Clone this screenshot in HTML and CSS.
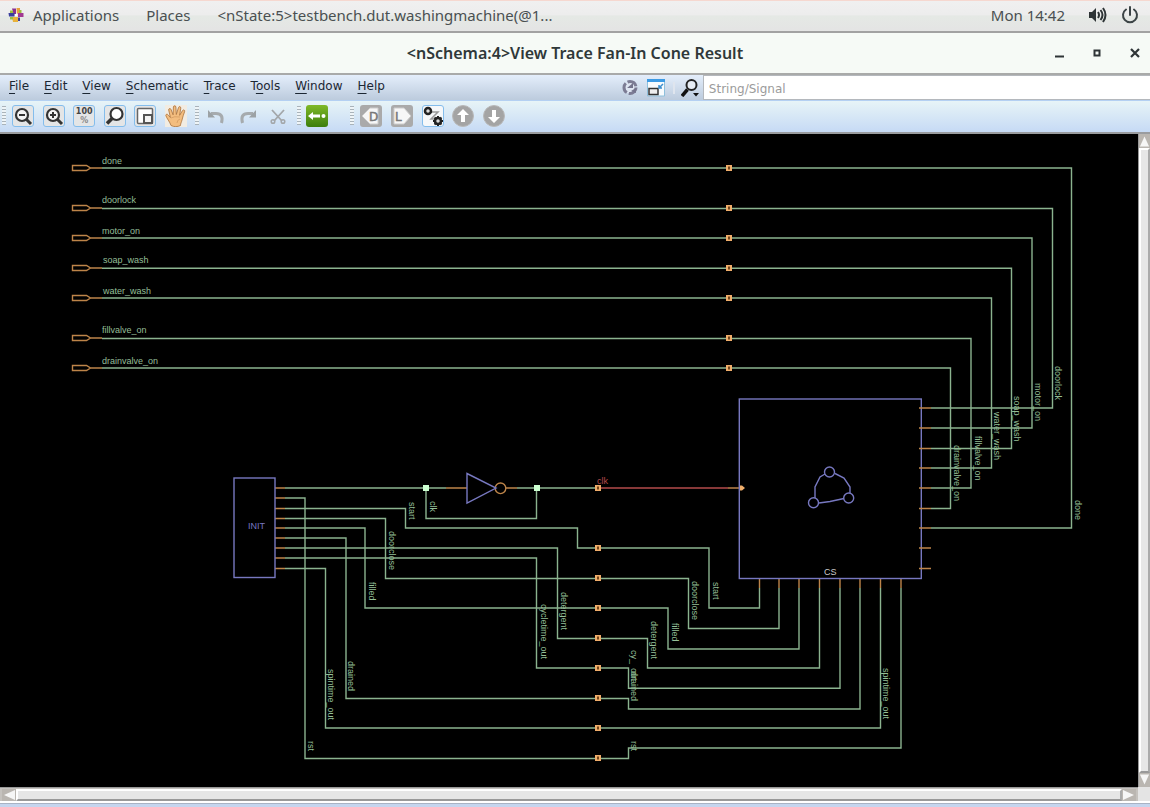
FILE: index.html
```html
<!DOCTYPE html>
<html lang="en">
<head>
<meta charset="utf-8">
<title>View Trace Fan-In Cone Result</title>
<link rel="stylesheet" href="styles.css">
</head>
<body>
<header class="panel">
  <svg class="panel-logo" viewBox="0 0 16 16" aria-hidden="true">
    <path fill="#8a2f8f" d="M4 1.500h4v5.500H5.500z"/><path fill="#e9a03c" d="M8.500 1H12v4L9 7z"/>
    <path fill="#3a3f9d" d="M.5 6h6v3.500H1z"/><path fill="#a23a92" d="M10 6h5.500v4H10z"/>
    <path fill="#e8b23c" d="M4 10h3.500v5H5z"/><path fill="#3e3f96" d="M9.500 10.500H12V14H9z"/>
    <path fill="#9cc03e" d="M2 3.500h3V6H2zM11 3h2.500v3H11zM2 10h3v2.500H2z"/><path fill="#e8b23c" d="M7 10h3v5H7z"/>
    <path fill="#fff" d="M7 7h2v2H7z"/>
  </svg>
  <button class="panel-item">Applications</button>
  <button class="panel-item">Places</button>
  <button class="panel-item">&lt;nState:5&gt;testbench.dut.washingmachine(@1...</button>
  <span class="spacer"></span>
  <button class="panel-item">Mon 14:42</button>
  <button class="panel-icon" aria-label="Volume"><svg viewBox="0 0 18 18"><path fill="#2e3436" d="M0 6h3l4-4v14l-4-4H0z"/><path fill="none" stroke="#2e3436" stroke-width="2" d="M9 6q2 3 0 6M11.500 4q4 5 0 10M14 2q5 7 0 14"/></svg></button>
  <button class="panel-icon" aria-label="Power"><svg viewBox="0 0 18 18"><path fill="none" stroke="#3c4446" stroke-width="2" stroke-linecap="round" d="M9 1v8M5 3.500a7 7 0 1 0 8 0"/></svg></button>
</header>

<div class="titlebar">
  <h1>&lt;nSchema:4&gt;View Trace Fan-In Cone Result</h1>
  <div class="window-buttons">
    <button aria-label="Minimize"><svg viewBox="0 0 10 10"><path stroke="#2e3436" stroke-width="2" d="M1 8.500h9"/></svg></button>
    <button aria-label="Maximize"><svg viewBox="0 0 10 10"><path fill="none" stroke="#2e3436" stroke-width="2" d="M2.500 2.500h5v5h-5z"/></svg></button>
    <button aria-label="Close"><svg viewBox="0 0 10 10"><path stroke="#2e3436" stroke-width="2.200" d="M1 1l8 8M9 1l-8 8"/></svg></button>
  </div>
</div>

<div class="menubar">
  <nav class="menus">
    <button><u>F</u>ile</button><button><u>E</u>dit</button><button><u>V</u>iew</button><button><u>S</u>chematic</button><button><u>T</u>race</button><button>T<u>o</u>ols</button><button><u>W</u>indow</button><button><u>H</u>elp</button>
  </nav>
  <div class="search">
    <button aria-label="Reload"><svg viewBox="0 0 18 18"><circle cx="9" cy="8.500" r="6" fill="#dfe6f2" stroke="#7c7c94" stroke-width="3" stroke-dasharray="10.500 2"/><path fill="#74748c" d="M6 9l6-5v5zM10 12l5-3v5z"/></svg></button>
    <button aria-label="Dock window"><svg viewBox="0 0 18 18"><path fill="#f8fbfd" stroke="#8fc0dc" d="M.5 1h17v16H.5z"/><path fill="#3d9be4" d="M0 0h18v3H0z"/><path fill="#eee" stroke="#333" stroke-width="1.500" d="M2 9.500h9v6H2z"/><path fill="none" stroke="#3d8fce" stroke-width="1.500" d="M16 5l-4 4M12 6v3h3"/></svg></button>
    <span class="divider"></span>
    <button aria-label="Search options"><svg viewBox="0 0 18 18"><circle cx="10.500" cy="6" r="5" fill="#e6ecf4" stroke="#222" stroke-width="2"/><path stroke="#111" stroke-width="3.500" d="M6.500 10.500L1 17"/><path fill="#111" d="M12 14h6l-3 3.500z"/></svg></button>
    <input type="text" aria-label="String or signal" placeholder="String/Signal">
  </div>
</div>

<div class="toolbar">
  <span class="grip"></span>
  <div class="group zoom-tools">
    <button class="framed" aria-label="Zoom out"><svg viewBox="1 1 20 20"><circle cx="10" cy="10" r="6" fill="#f4f4f4" stroke="#333" stroke-width="2.200"/><path stroke="#333" stroke-width="3" d="M14 14l5 5"/><path stroke="#333" stroke-width="2" d="M7 10h6"/></svg></button>
    <button class="framed" aria-label="Zoom in"><svg viewBox="1 1 20 20"><circle cx="10" cy="10" r="6" fill="#f4f4f4" stroke="#333" stroke-width="2.200"/><path stroke="#333" stroke-width="3" d="M14 14l5 5"/><path stroke="#333" stroke-width="2" d="M7 10h6M10 7v6"/></svg></button>
    <button class="framed percent" aria-label="Zoom 100 percent"><span>100</span><span class="sign">%</span></button>
    <button class="framed" aria-label="Find"><svg viewBox="1 1 20 20"><circle cx="12.500" cy="9" r="6" fill="#fff" stroke="#333" stroke-width="2.200"/><path stroke="#333" stroke-width="3.500" d="M8 13.500L3 18.500"/></svg></button>
    <button class="framed" aria-label="Zoom area"><svg viewBox="1 1 20 20"><rect x="3.500" y="3.500" width="15" height="15" rx="1" fill="#fff" stroke="#666" stroke-width="1.500"/><path fill="#f4f4f4" stroke="#555" stroke-width="2" d="M10 10h8v8h-8z"/></svg></button>
    <button class="hand" aria-label="Pan"><svg viewBox="0 0 22 22"><path fill="#f3bd7f" stroke="#a8713c" stroke-width=".8" stroke-linejoin="round" d="M6 20.500C5 17 1.500 13 .8 10.500c0-1.600 1.700-1.700 2.600-.3l2 2.300L3.700 5c-.2-1.700 1.900-2 2.400-.4l2 5.200L8.400 2c.2-1.700 2.400-1.600 2.500 0l.4 7.500L13.500 2.500c.5-1.500 2.500-1 2.300.6l-1.200 7.200 3-4.800c.9-1.300 2.600-.3 2 1.200-1.200 3-1.800 5.200-2.600 8.300-.5 2.200-1.500 3.500-1.500 5.500-3 1.500-6.500 1.500-9.500 0z"/><path fill="none" stroke="#c99058" stroke-width=".6" d="M6 13q3-2 9-1M12 18q0-3 3-4"/></svg></button>
  </div>
  <span class="grip second"></span>
  <div class="group edit-tools">
    <button aria-label="Undo"><svg viewBox="0 0 22 22"><path fill="none" stroke="#a6abae" stroke-width="3" d="M5 8.500h5q8 0 5.500 9.500"/><path fill="#9ca2a5" d="M2 5v7.500h7z"/></svg></button>
    <button aria-label="Redo"><svg viewBox="0 0 22 22"><path fill="none" stroke="#a6abae" stroke-width="3" d="M16 8.500h-5q-8 0-5.500 9.500"/><path fill="#9ca2a5" d="M19 5v7.500h-7z"/></svg></button>
    <button aria-label="Cut"><svg viewBox="0 0 22 22"><path fill="none" stroke="#a3a7aa" stroke-width="1.800" d="M5 5l10 11M17 5L7 16"/><circle cx="6" cy="16.500" r="1.800" fill="none" stroke="#a3a7aa" stroke-width="1.500"/><circle cx="16" cy="16.500" r="1.800" fill="none" stroke="#a3a7aa" stroke-width="1.500"/></svg></button>
  </div>
  <span class="grip third"></span>
  <button class="back" aria-label="Back"><svg viewBox="0 0 22 22"><path fill="#fff" d="M2 11l5-4v2.500h7v3H7V15z"/><circle cx="17.500" cy="11" r="2" fill="#fff"/></svg></button>
  <span class="grip fourth"></span>
  <div class="group trace-tools">
    <button aria-label="Driver"><svg viewBox="0 0 22 22"><rect width="22" height="22" rx="3" fill="#aaa"/><path fill="#f7f7f7" stroke="#ccc" d="M2 11L10 3h8v16h-8z"/><text class="gate-letter" x="9" y="16">D</text></svg></button>
    <button aria-label="Load"><svg viewBox="0 0 22 22"><rect width="22" height="22" rx="3" fill="#aaa"/><path fill="#f7f7f7" stroke="#ccc" d="M20 11L13 3H3v16h10z"/><text class="gate-letter" x="4" y="16">L</text></svg></button>
    <button class="framed path" aria-label="Trace path"><svg viewBox="1 1 20 20"><path fill="none" stroke="#999" stroke-width="1.500" d="M8 7h8l-7 7h5"/><circle cx="6" cy="6" r="3" fill="#ddd" stroke="#222" stroke-width="2.500"/><circle cx="16" cy="16" r="3" fill="#ddd" stroke="#222" stroke-width="2.500"/><path stroke="#222" stroke-width="2" d="M16 11v2M16 19v2M11 16h2M19 16h2M12.500 12.500l1.500 1.500M18 18l1.500 1.500M12.500 19.500l1.500-1.500M18 14l1.500-1.500"/></svg></button>
    <button aria-label="Up"><svg viewBox="0 0 22 22"><circle cx="11" cy="11" r="10.500" fill="#a4a4a4" stroke="#b9b9b9"/><path fill="#fff" d="M11 4l6 6h-4v7H9v-7H5z"/></svg></button>
    <button aria-label="Down"><svg viewBox="0 0 22 22"><circle cx="11" cy="11" r="10.500" fill="#a4a4a4" stroke="#b9b9b9"/><path fill="#fff" d="M11 18l6-6h-4V5H9v7H5z"/></svg></button>
  </div>
</div>

<main class="workspace">
  <svg class="schematic" viewBox="0 134 1138 653" preserveAspectRatio="xMinYMin meet" role="img" aria-label="Fan-in cone schematic">
    <defs>
      <path id="port" d="M72.500 -2.500h14l4 2.500l-4 2.500h-14zM91 0h11"/>
      <g id="mark"><rect x="-3" y="-3" width="6" height="6"/><path class="mark-core" d="M0 -1.500v3"/></g>
    </defs>
    <g class="net">
      <path d="M102 168H1071.500V528H931"/>
      <path d="M102 208.500H1052.500V408H931"/>
      <path d="M102 238H1032V428H931"/>
      <path d="M102 268.300H1011.500V448.500H931"/>
      <path d="M102 298H991.500V468H931"/>
      <path d="M102 338.500H971V488H931"/>
      <path d="M102 368H950.500V508.500H931"/>
      <path d="M285 488H446M517 488H598M426 488V518.500H536.500V488"/>
      <path d="M285 498H305V758.500H628.500V748H901V588"/>
      <path d="M285 508.500H405.500V528H577.500V548H709V608H759.500V588"/>
      <path d="M285 518.500H385.500V578.500H688.500V628.500H779V588"/>
      <path d="M285 528H365V608H668V649H799V588"/>
      <path d="M285 538H346V698.500H628.500V709H860V588"/>
      <path d="M285 548H557.500V638.500H647.500V668H819.500V588"/>
      <path d="M285 558H536.500V668H628.500V688.300H840V588"/>
      <path d="M285 568.500H325.500V728H880.500V588"/>
    </g>
    <path class="clock" d="M598 488H728"/>
    <g class="pin">
      <use href="#port" y="168"/><use href="#port" y="208"/><use href="#port" y="238"/><use href="#port" y="268"/><use href="#port" y="298"/><use href="#port" y="338"/><use href="#port" y="368"/>
      <path d="M275 488h10M275 498h10M275 508.500h10M275 518.500h10M275 528h10M275 538h10M275 548h10M275 558h10M275 568.500h10"/>
      <path d="M446 488h21M506 488h11M728 488h12"/>
      <circle cx="500.500" cy="488.300" r="5.300"/>
      <path d="M759.500 579v9M779 579v9M799 579v9M819.500 579v9M840 579v9M860 579v9M880.500 579v9M901 579v9"/>
    </g>
    <g class="block">
      <rect x="234" y="478" width="41" height="99.500"/>
      <rect x="739.300" y="399" width="182" height="179.500"/>
      <path d="M467 473.500V503L496 488z"/>
      <circle cx="829.500" cy="472" r="5"/><circle cx="813.500" cy="502.700" r="5"/><circle cx="848.700" cy="498" r="5"/>
      <path d="M815 498V487L820 477L825 474M835 473.500L844 478L850 487V493M819 503L830 501.500L844 498.500"/>
    </g>
    <path class="pin" d="M919 408h12M919 428h12M919 448.500h12M919 468h12M919 488h12M919 508.500h12M919 528h12M919 548h12M919 568.500h12"/>
    <g class="mark">
      <use href="#mark" x="729" y="168"/><use href="#mark" x="729" y="208"/><use href="#mark" x="729" y="238"/><use href="#mark" x="729" y="268"/><use href="#mark" x="729" y="298"/><use href="#mark" x="729" y="338"/><use href="#mark" x="729" y="368"/>
      <use href="#mark" x="598" y="488"/><use href="#mark" x="598" y="548"/><use href="#mark" x="598" y="578"/><use href="#mark" x="598" y="608"/><use href="#mark" x="598" y="638"/><use href="#mark" x="598" y="668"/><use href="#mark" x="598" y="698"/><use href="#mark" x="598" y="728"/><use href="#mark" x="598" y="758"/>
      <path d="M740 485.500h2l3 2.500l-3 2.500h-2z"/>
    </g>
    <path class="joint" d="M423 485h6v6h-6zM534 485h6v6h-6z"/>
    <g class="label">
      <text x="102" y="164">done</text><text x="102" y="203">doorlock</text><text x="102" y="234">motor_on</text><text x="103" y="263">soap_wash</text><text x="103" y="294">water_wash</text><text x="102" y="333">fillvalve_on</text><text x="102" y="364">drainvalve_on</text>
      <text transform="translate(1075 500) rotate(90)">done</text>
      <text transform="translate(1055 366) rotate(90)">doorlock</text>
      <text transform="translate(1035 383) rotate(90)">motor_on</text>
      <text transform="translate(1014 396) rotate(90)">soap_wash</text>
      <text transform="translate(994 412) rotate(90)">water_wash</text>
      <text transform="translate(975 436) rotate(90)">fillvalve_on</text>
      <text transform="translate(954 445) rotate(90)">drainvalve_on</text>
      <text transform="translate(409 502) rotate(90)">start</text>
      <text transform="translate(430 501) rotate(90)">clk</text>
      <text transform="translate(389 531) rotate(90)">doorclose</text>
      <text transform="translate(369 582) rotate(90)">filled</text>
      <text transform="translate(348 661) rotate(90)">drained</text>
      <text transform="translate(328 669) rotate(90)">spintime_out</text>
      <text transform="translate(308 741) rotate(90)">rst</text>
      <text transform="translate(541 604) rotate(90)">cycletime_out</text>
      <text transform="translate(561 592) rotate(90)">detergent</text>
      <text transform="translate(692 581) rotate(90)">doorclose</text>
      <text transform="translate(713 582) rotate(90)">start</text>
      <text transform="translate(672 623) rotate(90)">filled</text>
      <text transform="translate(651 621) rotate(90)">detergent</text>
      <text transform="translate(631 650) rotate(90)">cy_</text>
      <text transform="translate(631 668) rotate(90)">out</text>
      <text transform="translate(631 671) rotate(90)">drained</text>
      <text transform="translate(631 741) rotate(90)">rst</text>
      <text transform="translate(883 668) rotate(90)">spintime_out</text>
    </g>
    <text class="label clock-label" x="597" y="484">clk</text>
    <text class="label init-label" x="248" y="529">INIT</text>
    <text class="label cs-label" x="824" y="575">CS</text>
  </svg>
  <div class="scroll vertical">
    <button aria-label="Scroll up"><svg viewBox="0 0 12 14"><path fill="#f6f6f6" d="M6 2l5 11H1z"/></svg></button>
    <div class="thumb"></div>
    <button aria-label="Scroll down"><svg viewBox="0 0 12 14"><path fill="#f6f6f6" d="M6 12L1 1h10z"/></svg></button>
  </div>
  <div class="scroll horizontal">
    <button aria-label="Scroll left"><svg viewBox="0 0 14 12"><path fill="#f6f6f6" d="M2 6l11-5v10z"/></svg></button>
    <div class="thumb"></div>
    <button aria-label="Scroll right"><svg viewBox="0 0 14 12"><path fill="#f6f6f6" d="M12 6L1 1v10z"/></svg></button>
  </div>
  <div class="corner"></div>
</main>
<footer class="statusbar"></footer>
</body>
</html>
```
FILE: styles.css
```css
* { box-sizing: border-box; }
body {
  margin: 0;
  min-height: 100vh;
  display: flex;
  flex-direction: column;
  background: #e8e8e8;
  font-family: "DejaVu Sans", sans-serif;
  font-size: 12px;
  color: #1c2733;
}
button {
  margin: 0;
  padding: 0;
  border: 0;
  background: none;
  color: inherit;
  font: inherit;
  flex: none;
}
svg { display: block; }
.spacer { flex: 1; }

.panel {
  height: 33px;
  display: flex;
  align-items: center;
  padding: 0 11px 2px 8px;
  border-top: 1px solid #f6d8d0;
  border-bottom: 2px solid #a2a2a2;
  background: linear-gradient(#f0f0f0 0, #ededed 45%, #e5e9e5 50%, #e4e4e4 100%);
  font-family: "Noto Sans", sans-serif;
  font-size: 15px;
  color: #4a5052;
}
.panel-logo { width: 16px; height: 16px; margin-right: 9px; }
.panel-item { margin-right: 27px; }
.panel-icon { width: 18px; height: 18px; }
.panel-icon + .panel-icon { margin-left: 14px; }
.spacer + .panel-item { margin-right: 24px; }

.titlebar {
  height: 42px;
  display: grid;
  grid-template-columns: 1fr auto 1fr;
  align-items: center;
  padding: 0 10px 0;
  background: #f6faf6;
  border-bottom: 2px solid #a9aaa9;
}
.titlebar h1 {
  grid-column: 2;
  margin: 0;
  font-family: "Noto Sans", sans-serif;
  font-size: 16px;
  font-weight: 600;
  line-height: 20px;
  color: #2f3839;
}
.window-buttons { justify-self: end; display: flex; gap: 28px; }
.window-buttons svg { width: 10px; height: 10px; }

.menubar {
  height: 26px;
  display: flex;
  align-items: center;
  background: linear-gradient(#e4eefb, #bccbdd);
  border-bottom: 1px solid #b4d0f2;
}
.menus { display: flex; gap: 15px; padding: 0 0 3px 9px; flex: none; }
.menus u { text-underline-offset: 3px; }
.search { display: flex; align-items: center; flex: 1; margin-left: 236px; align-self: stretch; }
.search svg { width: 18px; height: 18px; }
.search button + button { margin-left: 8px; }
.divider { width: 2px; height: 12px; margin: 0 6px 0 8px; background: #dfe5ee; }
.search input {
  flex: 1;
  min-width: 0;
  height: 25px;
  margin-left: 4px;
  padding: 2px 5px 0;
  border: 1px solid #b4b8bd;
  border-right: 0;
  background: #fff;
  font: inherit;
}
.search input::placeholder { color: #9b9b9b; opacity: 1; }

.toolbar {
  height: 33px;
  display: flex;
  align-items: center;
  padding: 0 2px 2px;
  background: linear-gradient(#e7f4f7, #c6daf5);
  border-bottom: 2px solid #9a9c9f;
}
.toolbar svg { width: 100%; height: 100%; }
.group { display: flex; justify-content: space-between; flex: none; }
.group button, .back { width: 22px; height: 22px; }
.zoom-tools { width: 175px; margin-left: 6px; }
.edit-tools { width: 83px; margin-left: 7px; }
.trace-tools { width: 145px; margin-left: 6px; }
.grip { width: 4px; height: 19px; flex: none; background: repeating-linear-gradient(#a9b3ba 0 1px, #eef4f7 1px 3px); }
.second, .third { margin-left: 8px; }
.fourth { margin-left: 22px; }
.group .framed { border: 1px solid #84bdec; border-radius: 3px; background: #e4e5e6; }
.group .path { background: #f6f8fa; }
.percent { display: flex; flex-direction: column; align-items: center; justify-content: center; font-size: 8px; font-weight: bold; line-height: 9px; color: #444; }
.sign { color: #888; }
.hand { background: #f2ece2; }
.back { margin-left: 5px; border-radius: 3px; background: linear-gradient(#7fb928, #3d7e0c); }
.gate-letter { font-family: "DejaVu Sans", sans-serif; font-size: 12px; fill: #777; stroke: #777; stroke-width: .5; }

.workspace { flex: 1; display: grid; grid-template-columns: 1fr 12px; grid-template-rows: 1fr 14px; }
.schematic { width: 100%; height: 100%; min-height: 0; background: #000; }
.net, .clock, .pin, .block { fill: none; stroke-width: 1.4; }
.net { stroke: #8bb38f; }
.clock { stroke: #b54b4b; }
.pin { stroke: #bd8449; }
.block { stroke: #7778c0; }
.mark { fill: #f0ae6b; }
.mark-core { stroke: #70441a; stroke-width: 2; }
.joint { fill: #ccffd0; }
.label { font-family: "Liberation Sans", sans-serif; font-size: 9px; fill: #94bf97; }
.clock-label { fill: #b54b4b; }
.init-label { fill: #7778c0; }
.cs-label { fill: #cccccc; }

.scroll { display: flex; background: #c5c2be; }
.scroll button { background: #bab6b1; }
.scroll svg { width: 100%; height: 100%; }
.thumb { flex: 1; background: #e6e6e6; border: 2px solid; border-color: #fff #aaa #999 #fff; }
.vertical { flex-direction: column; border-left: 1px solid #999; }
.vertical button { height: 14px; }
.horizontal { padding: 1px 2px 0; border-top: 1px solid #999; }
.horizontal button { width: 14px; }
.corner { background: #e4e4e4; }
.statusbar { height: 6px; background: linear-gradient(#fff 0 2px, #a9b3c4 2px 3px, #c5d5ee 3px); }
```
